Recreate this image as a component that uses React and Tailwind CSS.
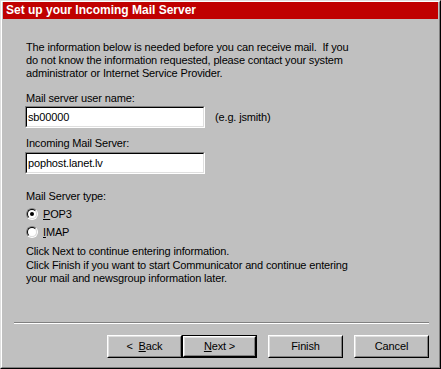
const Field = ({ value }) => (
  <div className="w-[180px] h-[22px] border border-t-[#808080] border-l-[#808080] border-b-white border-r-white">
    <div className="h-full border border-t-black border-l-black border-b-[#dfdfdf] border-r-[#dfdfdf] bg-white pl-[1px] leading-[18px]">
      {value}
    </div>
  </div>
);

const Radio = ({ checked, children }) => (
  <div className="flex items-center h-[18px]">
    <div className="w-[12px] h-[12px] rounded-full border border-t-[#808080] border-l-[#808080] border-b-white border-r-white">
      <div className="w-full h-full rounded-full border border-t-black border-l-black border-b-[#dfdfdf] border-r-[#dfdfdf] bg-white flex items-center justify-center">
        {checked && <div className="w-[4px] h-[4px] rounded-full bg-black" />}
      </div>
    </div>
    <span className="ml-[5px]">{children}</span>
  </div>
);

const Button = ({ children, isDefault }) => {
  const inner = (
    <div className="h-full border border-t-white border-l-white border-b-black border-r-black">
      <div className="h-full border border-t-[#dfdfdf] border-l-[#dfdfdf] border-b-[#808080] border-r-[#808080] flex items-center justify-center whitespace-pre">
        {children}
      </div>
    </div>
  );
  if (isDefault)
    return <div className="w-[75px] h-[23px] border border-black">{inner}</div>;
  return <div className="w-[75px] h-[23px]">{inner}</div>;
};

const App = () => {
  return (
    <div
      className="w-[441px] h-[369px] bg-[#c0c0c0] text-black text-[11px] leading-[13px] tracking-[-0.15px] border border-t-[#dfdfdf] border-l-[#dfdfdf] border-b-black border-r-black"
      style={{ fontFamily: '"Liberation Sans", Arial, sans-serif' }}
    >
      <div className="h-full border border-t-white border-l-white border-b-[#808080] border-r-[#808080] flex flex-col">
        {/* title band */}
        <div className="mx-[1px] h-[17px] bg-[#c00000] text-white font-bold text-[12px] leading-[17px] tracking-normal pl-[3px]">
          Set up your Incoming Mail Server
        </div>

        <div className="pl-[23px] pt-[22px] flex flex-col">
          <p className="pl-[1px]">
            The information below is needed before you can receive mail.&nbsp; If you
            <br />
            do not know the information requested, please contact your system
            <br />
            administrator or Internet Service Provider.
          </p>

          <p className="mt-[12px] pl-[1px]">Mail server user name:</p>
          <div className="mt-[1px] flex items-center">
            <Field value="sb00000" />
            <span className="ml-[10px]">(e.g. jsmith)</span>
          </div>

          <p className="mt-[9px] pl-[1px]">Incoming Mail Server:</p>
          <div className="mt-[2px]">
            <Field value="pophost.lanet.lv" />
          </div>

          <p className="mt-[16px] pl-[1px]">Mail Server type:</p>
          <div className="mt-[2px] pl-[1px]">
            <Radio checked>
              <u>P</u>OP3
            </Radio>
            <Radio>
              <u>I</u>MAP
            </Radio>
          </div>

          <p className="mt-[4px] pl-[1px]">Click Next to continue entering information.</p>
          <p className="mt-[1px] pl-[1px]">
            Click Finish if you want to start Communicator and continue entering
            <br />
            your mail and newsgroup information later.
          </p>
        </div>

        {/* separator */}
        <div className="mt-auto ml-[12px] mr-[10px] border-t border-t-[#808080] border-b border-b-white" />

        <div className="mt-[11px] mb-[9px] flex justify-end pr-[10px]">
          <Button>
            {"<  "}
            <u>B</u>ack
          </Button>
          <Button isDefault>
            <u>N</u>ext{" >"}
          </Button>
          <div className="w-[11px]" />
          <Button>Finish</Button>
          <div className="w-[11px]" />
          <Button>Cancel</Button>
        </div>
      </div>
    </div>
  );
};

export default App;
